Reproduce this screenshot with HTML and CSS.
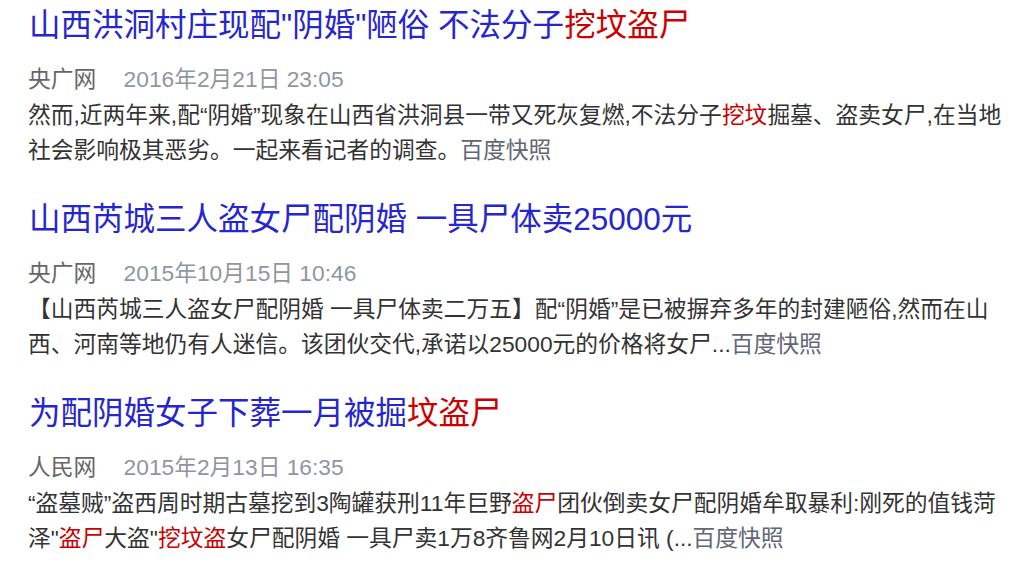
FILE: index.html
```html
<!DOCTYPE html>
<html lang="zh-CN">
<head>
    <meta charset="UTF-8">
    <meta name="viewport" content="width=device-width, initial-scale=1.0">
    <title>阴婚 盗尸 - 搜索结果</title>
    <link rel="stylesheet" href="styles.css">
</head>
<body>
    <div class="results">
        <div class="result">
            <h3 class="result-title"><a href="#">山西洪洞村庄现配"阴婚"陋俗 不法分子<em>挖坟盗尸</em></a></h3>
            <div class="result-meta">
                <span class="source">央广网</span>
                <span class="date">2016年2月21日 23:05</span>
            </div>
            <p class="abstract">然而,近两年来,配“阴婚”现象在山西省洪洞县一带又死灰复燃,不法分子<em>挖坟</em>掘墓、盗卖女尸,在当地社会影响极其恶劣。一起来看记者的调查。<a class="snapshot" href="#">百度快照</a></p>
        </div>

        <div class="result">
            <h3 class="result-title"><a href="#">山西芮城三人盗女尸配阴婚 一具尸体卖25000元</a></h3>
            <div class="result-meta">
                <span class="source">央广网</span>
                <span class="date">2015年10月15日 10:46</span>
            </div>
            <p class="abstract">【山西芮城三人盗女尸配阴婚 一具尸体卖二万五】配“阴婚”是已被摒弃多年的封建陋俗,然而在山西、河南等地仍有人迷信。该团伙交代,承诺以25000元的价格将女尸...<a class="snapshot" href="#">百度快照</a></p>
        </div>

        <div class="result">
            <h3 class="result-title"><a href="#">为配阴婚女子下葬一月被掘<em>坟盗尸</em></a></h3>
            <div class="result-meta">
                <span class="source">人民网</span>
                <span class="date">2015年2月13日 16:35</span>
            </div>
            <p class="abstract">“盗墓贼”盗西周时期古墓挖到3陶罐获刑11年巨野<em>盗尸</em>团伙倒卖女尸配阴婚牟取暴利:刚死的值钱菏泽"<em>盗尸</em>大盗"<em>挖坟盗</em>女尸配阴婚 一具尸卖1万8齐鲁网2月10日讯 (...<a class="snapshot" href="#">百度快照</a></p>
        </div>
    </div>
</body>
</html>
```

FILE: styles.css
```css
body {
    margin: 0;
    background-color: #fff;
    font-family: "Liberation Sans", Arial, "Noto Sans CJK SC", sans-serif;
    color: #333;
}
.results {
    padding: 6px 0 0 28px;
    width: 980px;
}
.result {
    margin-bottom: 32px;
}
.result-title {
    margin: 0;
    font-size: 31.5px;
    font-weight: normal;
    line-height: 38px;
    padding-left: 1px;
}
.result-title a {
    color: #2626cf;
    text-decoration: none;
}
em {
    font-style: normal;
    color: #cc0000;
}
.result-meta {
    margin-top: 18px;
    font-size: 22.75px;
    line-height: 34px;
}
.source {
    color: #666;
    margin-right: 21px;
}
.date {
    color: #9195a3;
}
.abstract {
    margin: 2px 0 0;
    font-size: 22.75px;
    line-height: 35px;
    color: #333;
}
.snapshot {
    color: #626675;
    text-decoration: none;
}
```
